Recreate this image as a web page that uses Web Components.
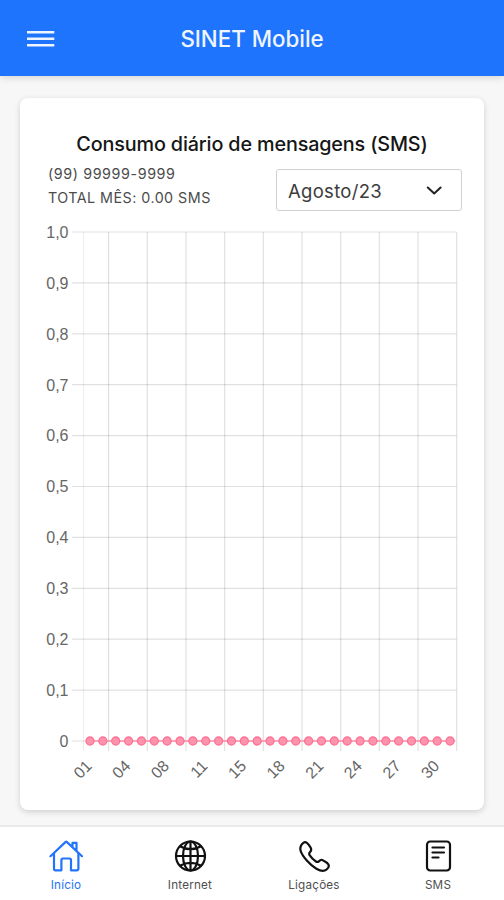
<!DOCTYPE html>
<html lang="pt-BR">
<head>
<meta charset="utf-8">
<meta name="viewport" content="width=device-width, initial-scale=1">
<title>SINET Mobile</title>
<style>
  body {
    margin: 0;
    font-family: Inter, "Liberation Sans", sans-serif;
    background: #f7f7f7;
  }
</style>
</head>
<body>
<sinet-app>
  <app-header slot="header">SINET Mobile</app-header>
  <usage-card heading="Consumo diário de mensagens (SMS)">
    <span slot="phone">(99) 99999-9999</span>
    <span slot="total">TOTAL MÊS: 0.00 SMS</span>
    <month-select slot="filter">Agosto/23</month-select>
    <usage-chart days="29"></usage-chart>
  </usage-card>
  <tab-bar slot="footer">
    <tab-item icon="home" active>Início</tab-item>
    <tab-item icon="globe">Internet</tab-item>
    <tab-item icon="call">Ligações</tab-item>
    <tab-item icon="sms">SMS</tab-item>
  </tab-bar>
</sinet-app>

<script>
class SinetApp extends HTMLElement {
  constructor() {
    super();
    this.attachShadow({ mode: 'open' });
    this.shadowRoot.innerHTML = `
      <style>
        :host {
          display: flex;
          flex-direction: column;
          height: 900px;
          overflow: hidden;
        }
        main {
          flex: 1;
          display: flex;
          min-height: 0;
          padding: 22px 20px 15px;
        }
      </style>
      <slot name="header"></slot>
      <main><slot></slot></main>
      <slot name="footer"></slot>
    `;
  }
}

class AppHeader extends HTMLElement {
  constructor() {
    super();
    this.attachShadow({ mode: 'open' });
    this.shadowRoot.innerHTML = `
      <style>
        :host {
          display: grid;
          grid-template-columns: 54px 1fr 54px;
          align-items: center;
          box-sizing: border-box;
          height: 76px;
          padding-top: 1px;
          background: #1e74fd;
          color: #eef5ff;
          box-shadow: 0 2px 7px rgba(0, 0, 0, .13);
        }
        svg {
          display: block;
          margin-left: 27px;
        }
        h1 {
          margin: 0;
          font-size: 22.3px;
          font-weight: 500;
          line-height: 28px;
          text-align: center;
        }
      </style>
      <svg width="28" height="18" viewBox="0 0 28 18" stroke="currentColor" stroke-width="2.5">
        <path d="M0 2.300h27.300M0 8.800h27.300M0 15.200h27.300"/>
      </svg>
      <h1><slot></slot></h1>
    `;
  }
}

class UsageCard extends HTMLElement {
  connectedCallback() {
    this.attachShadow({ mode: 'open' });
    this.shadowRoot.innerHTML = `
      <style>
        :host {
          display: flex;
          flex-direction: column;
          flex: 1;
          box-sizing: border-box;
          padding: 32px 20px 0;
          background: #fff;
          border-radius: 8px;
          box-shadow: 0 2px 6px rgba(0, 0, 0, .16);
        }
        h2 {
          margin: 0;
          color: #161616;
          font-size: 19.800px;
          font-weight: 500;
          line-height: 28px;
          letter-spacing: -.15px;
          text-align: center;
          white-space: nowrap;
        }
        .row {
          display: flex;
          justify-content: space-between;
          height: 64px;
          padding: 0 2px 0 8px;
        }
        .info {
          padding-top: 4px;
          color: #4b4b4b;
          font-size: 14.300px;
          line-height: 24px;
          letter-spacing: .6px;
        }
        .info div {
          white-space: nowrap;
        }
        .info .total {
          letter-spacing: .47px;
        }
      </style>
      <h2>${this.getAttribute('heading')}</h2>
      <div class="row">
        <div class="info">
          <div><slot name="phone"></slot></div>
          <div class="total"><slot name="total"></slot></div>
        </div>
        <slot name="filter"></slot>
      </div>
      <slot></slot>
    `;
  }
}

class MonthSelect extends HTMLElement {
  constructor() {
    super();
    this.attachShadow({ mode: 'open' });
    this.shadowRoot.innerHTML = `
      <style>
        :host {
          display: flex;
          align-items: center;
          justify-content: space-between;
          box-sizing: border-box;
          width: 186px;
          height: 42px;
          margin-top: 11px;
          padding: 1px 19px 0 11px;
          border: 1px solid #cdd1d2;
          border-radius: 3px;
          color: #3c3c3c;
          font-size: 18.500px;
          letter-spacing: .3px;
        }
        svg {
          display: block;
          color: #222;
        }
      </style>
      <slot></slot>
      <svg width="16" height="10" viewBox="0 0 16 10" fill="none" stroke="currentColor"
        stroke-width="2" stroke-linecap="round" stroke-linejoin="round">
        <path d="M1.800 1.500L8.200 7.500L14.600 1.500"/>
      </svg>
    `;
  }
}

class UsageChart extends HTMLElement {
  connectedCallback() {
    this.attachShadow({ mode: 'open' });
    this.render();
  }

  render() {
    const top = 10;
    const bottom = 519;
    const left = 43.500;
    const right = 416.500;
    const step = (bottom - top) / 10;
    const yLabels = ['1,0', '0,9', '0,8', '0,7', '0,6', '0,5', '0,4', '0,3', '0,2', '0,1', '0'];
    const xLabels = ['01', '04', '08', '11', '15', '18', '21', '24', '27', '30'];

    const rows = yLabels.map((label, i) => {
      const y = top + i * step;
      return `
        <line x1="32" x2="${right}" y1="${y}" y2="${y}"/>
        <text x="28.500" y="${y + 5.800}" text-anchor="end">${label}</text>`;
    }).join('');

    // first column is narrower than the others
    const columns = xLabels.map((label, i) => {
      const x = 68.600 + i * 38.680;
      const lx = 52.800 + i * 38.620;
      return `
        <line x1="${x}" x2="${x}" y1="${top}" y2="529"/>
        <text transform="translate(${lx} 545) rotate(-45)" text-anchor="end">${label}</text>`;
    }).join('');

    const days = Number(this.getAttribute('days'));
    const points = Array.from({ length: days }, (_, i) =>
      `<circle cx="${50 + i * 12.860}" cy="${bottom}" r="4"/>`
    ).join('');

    this.shadowRoot.innerHTML = `
      <style>
        :host {
          display: block;
        }
        svg {
          display: block;
        }
        line {
          stroke: rgba(0, 0, 0, .12);
          stroke-width: 1.200;
        }
        text {
          fill: #666;
          font: 16px "Liberation Sans", sans-serif;
        }
        .series line {
          stroke: #ff8fa8;
          stroke-width: 1.500;
        }
        .series circle {
          fill: #ff93ad;
          stroke: #fb7394;
          stroke-width: 1.300;
        }
      </style>
      <svg width="424" height="580" viewBox="0 0 424 580">
        <line x1="${left}" x2="${left}" y1="${top}" y2="529" style="stroke: rgba(0, 0, 0, .07)"/>
        ${rows}
        ${columns}
        <g class="series">
          <line x1="50" x2="415" y1="${bottom}" y2="${bottom}"/>
          ${points}
        </g>
      </svg>
    `;
  }
}

class TabBar extends HTMLElement {
  constructor() {
    super();
    this.attachShadow({ mode: 'open' });
    this.shadowRoot.innerHTML = `
      <style>
        :host {
          display: grid;
          grid-template-columns: repeat(4, 1fr);
          box-sizing: border-box;
          height: 75px;
          padding: 0 4px;
          border-top: 2px solid #ebebeb;
          background: #fff;
        }
      </style>
      <slot></slot>
    `;
  }
}

const ICONS = {
  home: `
    <path d="M5 15.500V30.800a1.500 1.500 0 0 0 1.500 1.500h5.900V22a1.500 1.500 0 0 1 1.500-1.500h6.600a1.500 1.500 0 0 1 1.500 1.500v10.300h5.900a1.500 1.500 0 0 0 1.500-1.500V15.500"/>
    <path d="M1.500 18.200L16.400 4.100a1.200 1.200 0 0 1 1.600 0L33 18.200M27.500 12.800V4.800h-4v4.200"/>`,
  globe: `
    <circle cx="17.500" cy="18" r="14.500"/>
    <ellipse cx="17.500" cy="18" rx="7.500" ry="14.500"/>
    <path d="M17.500 3.500v29M3 18h29M7.500 8.500c5.800 3.500 14.200 3.500 20 0M7.500 27.500c5.800-3.500 14.200-3.500 20 0"/>`,
  call: `
    <path d="M31.200 26.200c-.9-1.500-3.400-3-5-3.800-1.700-.9-2.900-.5-4.100.7-1.100 1.100-1.800 1.300-3.200.4a22 22 0 0 1-6.300-6.300c-.9-1.400-.6-2.100.5-3.200 1.200-1.200 1.500-2.500.6-4.200-.8-1.500-2.300-4-3.800-5-1.200-.8-2.600-.7-3.700.2-2.900 2.300-3.300 5.200-2.500 8 1.600 5.300 9.400 14 15.700 17.700 3 1.700 7.500 2.800 10 1 1.700-1.300 3.100-3.500 1.800-5.500z"/>`,
  sms: `
    <rect x="6" y="3.500" width="23" height="29" rx="3.200"/>
    <path d="M11.500 9.500h11.500M11.500 14.500h11.500M11.500 19.500h6"/>`
};

class TabItem extends HTMLElement {
  connectedCallback() {
    this.attachShadow({ mode: 'open' });
    this.shadowRoot.innerHTML = `
      <style>
        :host {
          display: flex;
          flex-direction: column;
          align-items: center;
          padding-top: 11px;
          color: #111;
          font-size: 11.700px;
        }
        svg {
          display: block;
        }
        span {
          margin-top: 2px;
          color: #505050;
          line-height: 18px;
          letter-spacing: .2px;
        }
        :host([active]), :host([active]) span {
          color: #2374fa;
        }
      </style>
      <svg width="34" height="36" viewBox="0 0 34 36" fill="none" stroke="currentColor"
        stroke-width="2.200" stroke-linecap="round" stroke-linejoin="round">
        ${ICONS[this.getAttribute('icon')]}
      </svg>
      <span><slot></slot></span>
    `;
  }
}

customElements.define('sinet-app', SinetApp);
customElements.define('app-header', AppHeader);
customElements.define('usage-card', UsageCard);
customElements.define('month-select', MonthSelect);
customElements.define('usage-chart', UsageChart);
customElements.define('tab-bar', TabBar);
customElements.define('tab-item', TabItem);
</script>
</body>
</html>
